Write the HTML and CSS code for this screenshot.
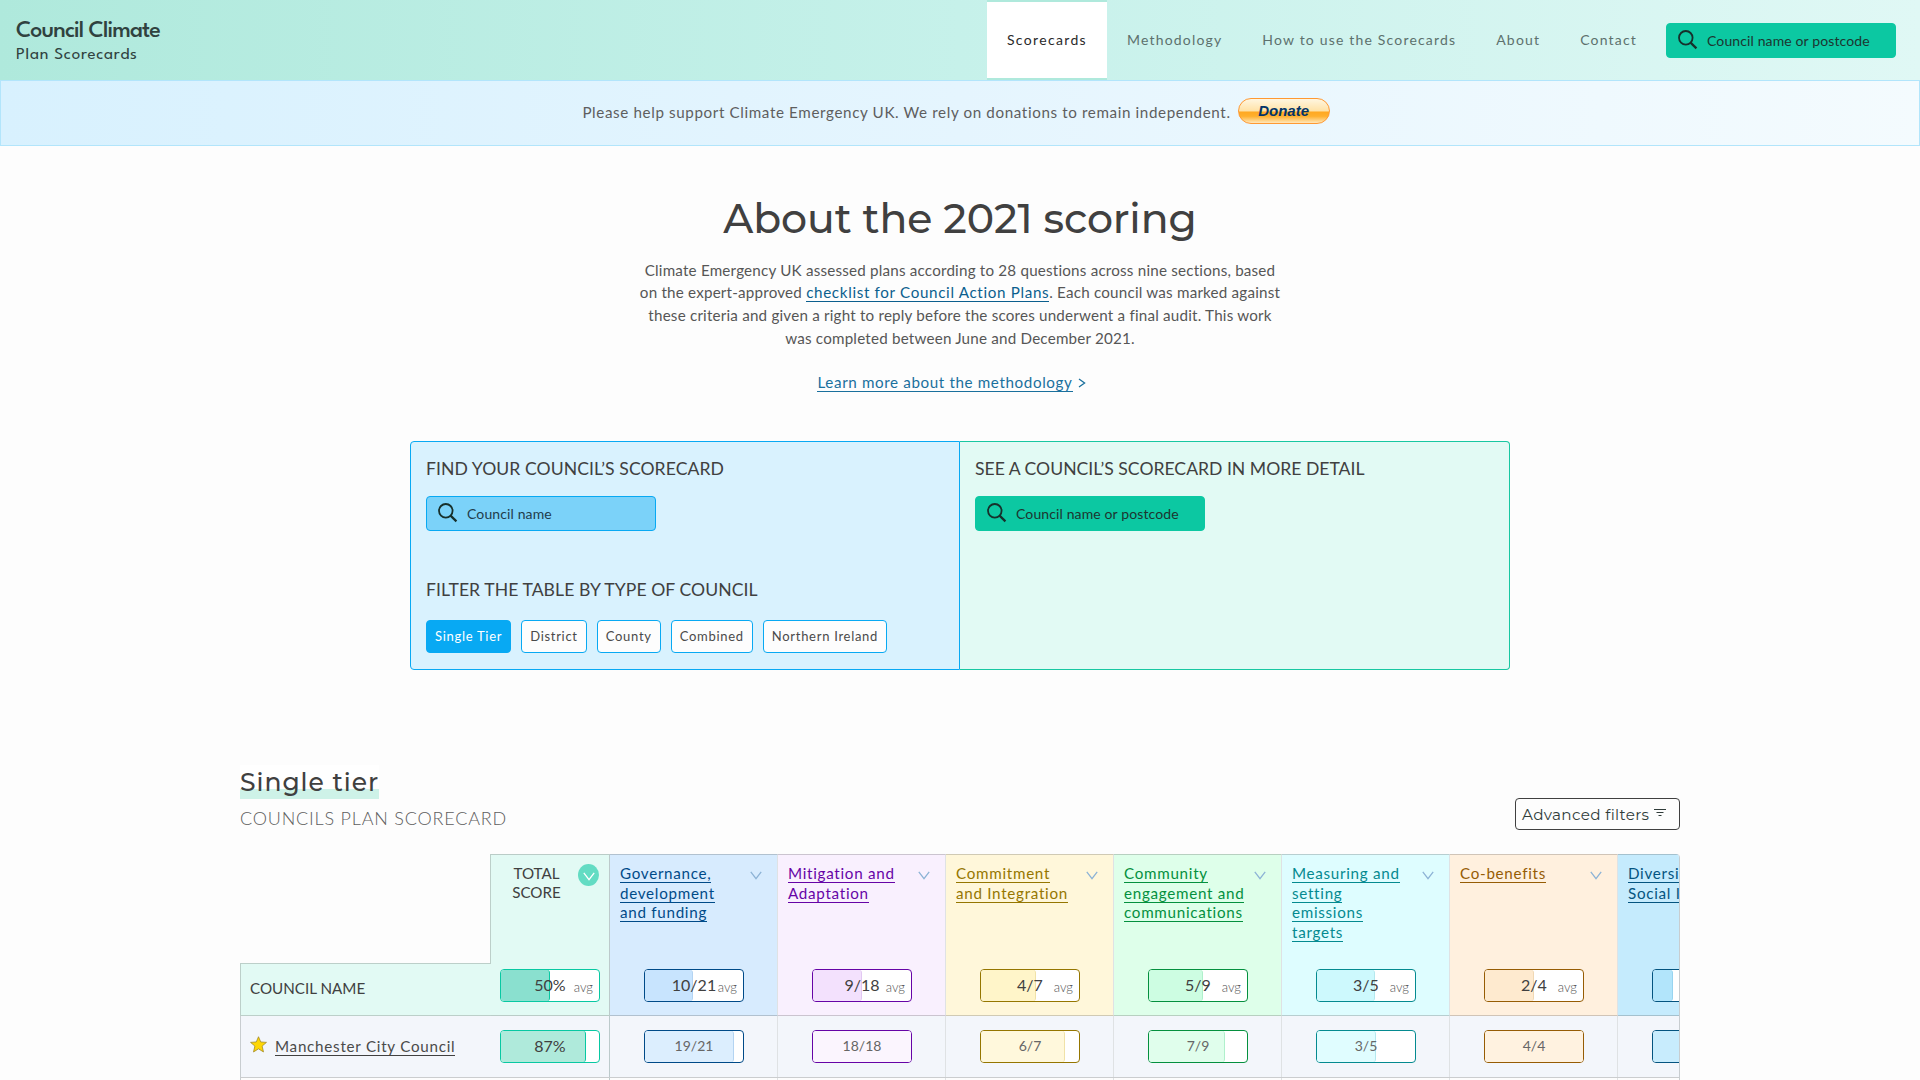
FILE: index.html
```html
<!DOCTYPE html>
<html lang="en">
<head>
<meta charset="utf-8">
<title>Council Climate Plan Scorecards</title>
<link rel="stylesheet" href="styles.css">
</head>
<body>
<svg width="0" height="0" class="defs">
  <symbol id="search" viewBox="0 0 20 20"><circle cx="7.8" cy="7.8" r="6.8" fill="none" stroke="currentColor" stroke-width="1.8"/><path d="M12.6 12.6 L18.4 18.4" stroke="currentColor" stroke-width="2.2" fill="none"/></symbol>
  <symbol id="chevron" viewBox="0 0 12 9"><path d="M0.8 0.8 L6 7.6 L11.2 0.8" fill="none" stroke="currentColor" stroke-width="1.3"/></symbol>
</svg>
<header class="site-header">
  <a class="logo"><strong>Council Climate</strong><span>Plan Scorecards</span></a>
  <nav class="nav">
    <a class="active">Scorecards</a><a>Methodology</a><a>How to use the Scorecards</a><a>About</a><a>Contact</a>
  </nav>
  <label class="search search-green"><svg><use href="#search"/></svg><span>Council name or postcode</span></label>
</header>
<div class="banner">
  <p>Please help support Climate Emergency UK. We rely on donations to remain independent.</p>
  <button class="donate">Donate</button>
</div>
<main>
  <section class="intro">
    <h1>About the 2021 scoring</h1>
    <p>Climate Emergency UK assessed plans according to 28 questions across nine sections, based<br>on the expert-approved <a>checklist for Council Action Plans</a>. Each council was marked against<br>these criteria and given a right to reply before the scores underwent a final audit. This work<br>was completed between June and December 2021.</p>
    <p class="more"><a>Learn more about the methodology</a><svg viewBox="0 0 8 10"><path d="M1 1 L6.6 5 L1 9" fill="none" stroke="currentColor" stroke-width="1.3"/></svg></p>
  </section>
  <section class="panels">
    <div class="panel panel-blue">
      <h2>FIND YOUR COUNCIL’S SCORECARD</h2>
      <label class="search search-blue"><svg><use href="#search"/></svg><span>Council name</span></label>
      <h2 class="second">FILTER THE TABLE BY TYPE OF COUNCIL</h2>
      <div class="types"><a class="on">Single Tier</a><a>District</a><a>County</a><a>Combined</a><a>Northern Ireland</a></div>
    </div>
    <div class="panel panel-green">
      <h2>SEE A COUNCIL’S SCORECARD IN MORE DETAIL</h2>
      <label class="search search-green"><svg><use href="#search"/></svg><span>Council name or postcode</span></label>
    </div>
  </section>
  <section class="table-head">
    <div><h2><span>Single tier</span></h2><p>COUNCILS PLAN SCORECARD</p></div>
    <button class="filters">Advanced filters<svg viewBox="0 0 12 8"><path d="M0 .5H12M2.5 3.5H9.5M4.5 6.5H7.5" stroke="currentColor" stroke-width="1" fill="none"/></svg></button>
  </section>
  <section class="board">
    <div class="row head">
      <div class="corner"><span>COUNCIL NAME</span></div>
      <div class="cell total"><h3>TOTAL<br>SCORE</h3><i class="sort"><svg><use href="#chevron"/></svg></i><div class="bar"><b style="width:50%"></b><span>50%</span><em>avg</em></div></div>
      <div class="cell gov"><p><a>Governance,<br>development<br>and funding</a></p><svg class="chev"><use href="#chevron"/></svg><div class="bar"><b style="width:49%"></b><span>10/21</span><em>avg</em></div></div>
      <div class="cell mit"><p><a>Mitigation and<br>Adaptation</a></p><svg class="chev"><use href="#chevron"/></svg><div class="bar"><b style="width:50%"></b><span>9/18</span><em>avg</em></div></div>
      <div class="cell com"><p><a>Commitment<br>and Integration</a></p><svg class="chev"><use href="#chevron"/></svg><div class="bar"><b style="width:56%"></b><span>4/7</span><em>avg</em></div></div>
      <div class="cell eng"><p><a>Community<br>engagement and<br>communications</a></p><svg class="chev"><use href="#chevron"/></svg><div class="bar"><b style="width:55.5%"></b><span>5/9</span><em>avg</em></div></div>
      <div class="cell mea"><p><a>Measuring and<br>setting<br>emissions<br>targets</a></p><svg class="chev"><use href="#chevron"/></svg><div class="bar"><b style="width:59%"></b><span>3/5</span><em>avg</em></div></div>
      <div class="cell cob"><p><a>Co-benefits</a></p><svg class="chev"><use href="#chevron"/></svg><div class="bar"><b style="width:50%"></b><span>2/4</span><em>avg</em></div></div>
      <div class="cell div"><p><a>Diversity and<br>Social Inclusion</a></p><div class="bar"><b style="width:20%"></b></div></div>
    </div>
    <div class="row data">
      <div class="name"><svg viewBox="0 0 16 16"><path d="M8 .7 10.1 5.6 15.5 6 11.4 9.5 12.7 15 8 12.1 3.3 15 4.6 9.5 .5 6 5.9 5.6Z" fill="#fed604" stroke="#9c8420" stroke-width=".7"/></svg><a>Manchester City Council</a></div>
      <div class="cell total"><div class="bar"><b style="width:87%"></b><span>87%</span></div></div>
      <div class="cell gov"><div class="bar"><b style="width:90.5%"></b><span>19/21</span></div></div>
      <div class="cell mit"><div class="bar"><b style="width:100%"></b><span>18/18</span></div></div>
      <div class="cell com"><div class="bar"><b style="width:86%"></b><span>6/7</span></div></div>
      <div class="cell eng"><div class="bar"><b style="width:78%"></b><span>7/9</span></div></div>
      <div class="cell mea"><div class="bar"><b style="width:60%"></b><span>3/5</span></div></div>
      <div class="cell cob"><div class="bar"><b style="width:100%"></b><span>4/4</span></div></div>
      <div class="cell div"><div class="bar"><b style="width:100%"></b></div></div>
    </div>
    <div class="row rest"><div></div><div></div><div></div><div></div><div></div><div></div><div></div><div></div><div></div></div>
  </section>
</main>
</body>
</html>
```
FILE: styles.css
```css
* { box-sizing: border-box; margin: 0; }
html { overflow: hidden; }
body { height: 1080px; overflow: hidden; background: #fdfdfd; color: #5e5e5e; font: 15.2px/22.8px Lato, sans-serif; }
.defs { position: absolute; }
svg { display: block; flex: none; }
h1, h2, h3 { font-weight: 400; color: #404040; }

.site-header { display: flex; align-items: stretch; height: 80px; padding: 0 24px 0 16px; background: linear-gradient(90deg, #afe9dc, #c6f1ea 50%, #e0f8f5); }
.logo { display: flex; flex-direction: column; flex: 1; color: #30423f; font-family: "League Spartan", Spartan, Lato, sans-serif; }
.logo strong { margin-top: 17px; font-size: 24px; line-height: 28px; font-weight: 500; letter-spacing: -0.9px; }
.logo span { font-size: 17px; line-height: 20px; letter-spacing: .74px; margin-top: 0; }
.nav { display: flex; }
.nav a { padding: 0 20px; font-size: 14px; line-height: 80px; letter-spacing: 1.18px; color: #5d716d; }
.nav .active { background: #fff; border-block: 2px solid #afe9dc; line-height: 76px; letter-spacing: 1.34px; color: #2a2a2a; }
.search { display: flex; align-items: center; width: 230px; height: 35px; padding-left: 11px; border: 1px solid #0cc8a2; border-radius: 4px; color: #1d3530; }
.search svg { width: 20px; height: 20px; margin-right: 9px; margin-bottom: 1px; color: #17302b; }
.search span { width: 164px; overflow: hidden; white-space: nowrap; font-size: 14px; letter-spacing: .12px; padding-top: 1px; }
.search-green { background: #0cc8a2; }
.search-blue { background: #7bd2f9; border-color: #08a9f3; color: #1f3d4c; }
.site-header .search { margin: 23px 0 0 9px; }

.banner { display: flex; justify-content: center; height: 66px; padding: 17px 8px 0 0; border: 1px solid #b2e5fb; background: linear-gradient(90deg, #d8f1fe, #e5f5fe 50%, #f4fbfe); }
.banner p { margin: 3px 7px 0 0; letter-spacing: .62px; }
.donate { width: 92px; height: 26px; padding: 0; border: 1px solid #ff9933; border-radius: 13px; background: linear-gradient(#fff6e0 0, #ffe2a6 50%, #ffa822 54%, #ffb02e 72%, #ffe7bb 100%); font: italic 700 15px/22px "Liberation Sans", sans-serif; color: #033468; }

.intro { display: flex; flex-direction: column; align-items: center; text-align: center; }
.intro h1 { margin-top: 45px; font: 500 41px/54px Montserrat, Inter, sans-serif; letter-spacing: -.08px; }
.intro p { margin-top: 13.7px; letter-spacing: .2px; color: #565656; }
.intro a { letter-spacing: .66px; color: #0b5f8e; border-bottom: 1px solid #0b5f8e; }
.intro .more { display: flex; align-items: center; margin: 23.3px 17px 0 0; height: 18px; padding-left: 0; color: #1a709d; }
.more a { line-height: 18px; letter-spacing: .62px; border-color: #1a709d; color: #1a709d; }
.more svg { width: 8px; height: 10px; margin: 2px 0 0 5px; }

.panels { display: grid; grid-template-columns: 550px 550px; width: 1100px; height: 229px; margin: 50px auto 0; }
.panel { padding: 15px; border: 1px solid #08a9f3; border-radius: 4px 0 0 4px; background: #d9f2fe; }
.panel-green { border-color: #18c7a1; border-left: 0; border-radius: 0 4px 4px 0; background: #e2faf4; }
.panel h2 { font-size: 17.6px; line-height: 24px; }
.panel-blue h2 { letter-spacing: .06px; }
.panel .search { margin-top: 15px; }
.panel h2.second { margin-top: 47px; }
.types { display: flex; gap: 10px; margin-top: 18px; }
.types a { height: 33px; padding: 0 8px; border: 1px solid #08a9f3; border-radius: 4px; background: #fdfdfd; font-size: 13px; line-height: 31px; letter-spacing: .71px; color: #4a4a4a; }
.types .on { background: #08a9f3; color: #fff; }

.table-head { display: flex; justify-content: space-between; width: 1440px; height: 184px; margin: 0 auto; padding-top: 95px; }
.table-head h2 { font: 500 25px/34px Montserrat, Inter, sans-serif; letter-spacing: .96px; }
.table-head h2 span { display: inline-block; height: 34px; background: linear-gradient(#fff 24px, #cef2e8 24px); }
.table-head p { margin-top: 7px; font-size: 18px; line-height: 24px; font-weight: 300; letter-spacing: .8px; }
.filters { display: flex; align-items: center; width: 165px; height: 32px; margin-top: 33px; padding: 1px 0 0 6px; border: 1px solid #404040; border-radius: 4px; background: #fdfdfd; font: 400 15.2px/30px Montserrat, Inter, sans-serif; letter-spacing: .34px; color: #303c3a; }
.filters svg { width: 12px; height: 8px; margin: 0 0 3px 5px; }

.board { width: 1440px; margin: 0 auto; overflow: hidden; border-right: 1px solid #c8cdd0; border-top-right-radius: 4px; }
.row { display: grid; grid-template-columns: 250px 120px repeat(7, 168px); width: 1546px; }
.head { height: 162px; }
.corner { z-index: 1; display: flex; align-items: center; height: 53px; margin: 109px -1px 0 0; padding: 0 0 3px 9px; background: #e2faf4; border: 1px solid #bccfc9; border-right: 0; color: #404040; }
.cell { --line: #08c8a2; --fill: #8ae0cf; --edge: #08c8a2; position: relative; padding: 9px 9px 0 10px; border-right: 1px solid #dfe2e4; }
.head .cell { border-top: 1px solid rgba(60, 60, 60, .24); border-bottom: 1px solid rgba(60, 60, 60, .24); color: var(--line); }
.cell p { line-height: 19.6px; }
.head .cell a { border-bottom: 1px solid; letter-spacing: .71px; white-space: nowrap; }
.head .cell.total { padding: 9px 9px 0 8px; border-left: 1px solid #bccfc9; border-right-color: #bccacb; background: #e2faf4; }
.total h3 { width: 75px; font-size: 15.2px; line-height: 19px; text-align: center; }
.sort { position: absolute; left: 87px; top: 9px; width: 21px; height: 22px; padding: 8px 0 0 5px; border-radius: 50%; background: #63dcc3; color: #fff; }
.sort svg, .chev { width: 12px; height: 9px; }
.chev { position: absolute; right: 15px; top: 16px; color: #8db3d6; }
.bar { position: relative; width: 100px; height: 33px; border: 1px solid var(--line); border-radius: 4px; background: #fff; text-align: center; color: #404040; }
.head .bar { position: absolute; left: 34px; top: 114px; font-size: 16px; line-height: 30px; }
.head .total .bar { left: 9px; }
.bar b { position: absolute; left: 0; top: 0; height: 31px; border-right: 1px solid var(--edge); border-radius: 3px; background: var(--fill); }
.bar span { position: relative; }
.bar em { position: absolute; right: 6px; top: 2px; font: 300 13px/31px Lato, sans-serif; color: #505050; }

.gov { --line: #004a88; --fill: #c8e4fe; --edge: #b4d4f2; }
.mit { --line: #6604a6; --fill: #f3e1fd; --edge: #e2c8f2; }
.com { --line: #957600; --fill: #fff5c9; --edge: #f0e2a8; }
.eng { --line: #04903e; --fill: #cdfde2; --edge: #b0f0cc; }
.mea { --line: #048a90; --fill: #cdf9fd; --edge: #b4e8ee; }
.cob { --line: #965c04; --fill: #feeacf; --edge: #f0d8b4; }
.div { --line: #045480; --fill: #b2e5fb; --edge: #98d4f0; }
.head .gov { background: #d7ebfe; }
.head .mit { background: #f9f0fe; }
.head .com { background: #fff7da; }
.head .eng { background: #deffea; }
.head .mea { background: #defdff; }
.head .cob { background: #fff0de; }
.head .div { background: #c5ebfd; }

.data { height: 62px; background: #f3f6fb; border-bottom: 1px solid #cbcdcf; }
.data .total { --fill: #afeadb; }
.data .gov { --fill: #dceefe; }
.data .mit { --fill: #fbf5fe; --edge: #fbf5fe; }
.data .com { --fill: #fff8dc; }
.data .eng { --fill: #e0feec; }
.data .mea { --fill: #e0fdff; }
.data .cob { --fill: #fff2e0; --edge: #fff2e0; }
.data .div { --fill: #c8ecfd; }
.name { display: flex; align-items: flex-start; border-left: 1px solid #c8cdd0; padding: 20px 0 0 9px; }
.name svg { width: 17px; height: 17px; }
.name a { margin: 1px 0 0 8px; line-height: 18px; letter-spacing: .74px; border-bottom: 1px solid #404040; color: #4a4a4a; }
.data .cell { padding: 14px 0 0 34px; }
.data .cell.total { padding-left: 10px; border-right-color: #bccacb; }
.data .bar { font-size: 14px; line-height: 30px; color: #666; }
.data .total .bar { font-size: 16px; color: #404040; }
.rest { height: 10px; }
.rest div { border-right: 1px solid #dfe2e4; }
.rest div:first-child { border-left: 1px solid #c8cdd0; border-right: 0; }
.rest div:nth-child(2) { border-right-color: #bccacb; }
```
